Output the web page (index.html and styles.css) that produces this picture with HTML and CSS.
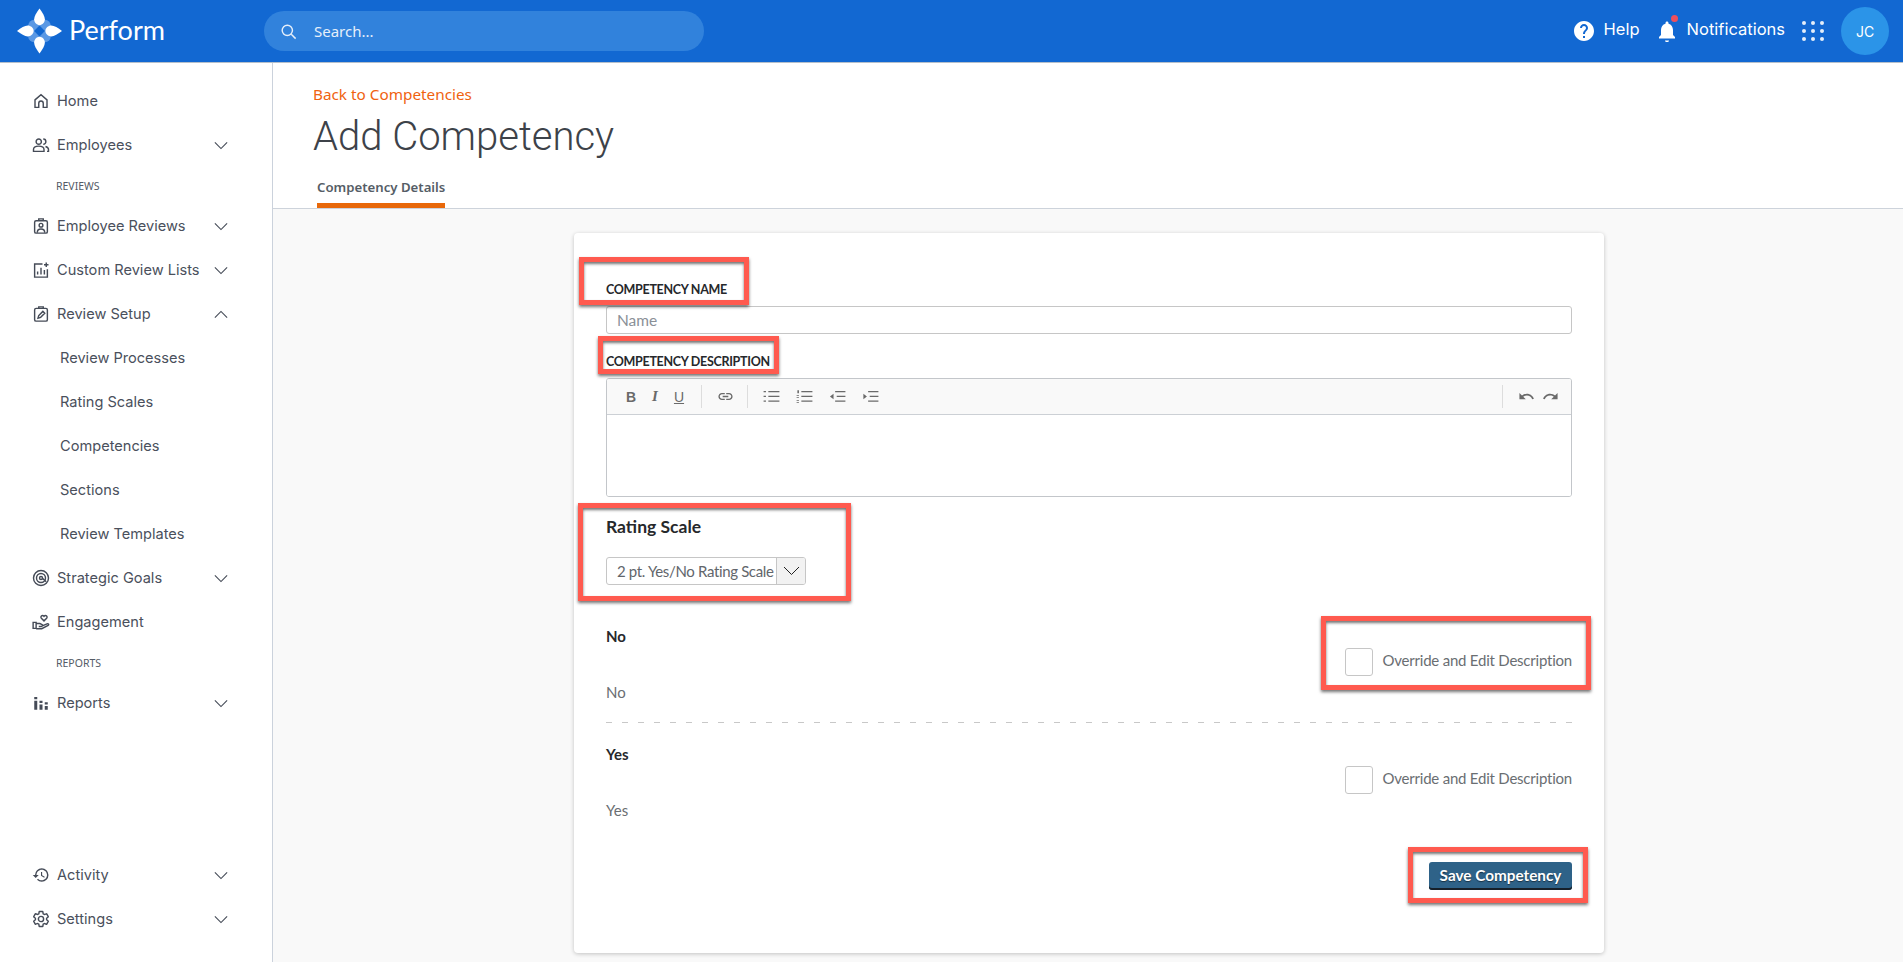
FILE: index.html
```html
<!DOCTYPE html>
<html lang="en">
<head>
<meta charset="utf-8">
<title>Add Competency</title>
<link rel="stylesheet" href="styles.css">
</head>
<body>
<svg class="defs" width="0" height="0" aria-hidden="true">
  <symbol id="down" viewBox="0 0 16 10"><path d="M1 1.500 8 8.500 15 1.500" fill="none" stroke="currentColor" stroke-width="1.300"/></symbol>
  <symbol id="up" viewBox="0 0 16 10"><path d="M1 8.500 8 1.500 15 8.500" fill="none" stroke="currentColor" stroke-width="1.300"/></symbol>
</svg>
<header class="topbar">
  <div class="brand">
    <svg class="logo" viewBox="0 0 46 46" aria-hidden="true">
      <rect x="11.500" y="11.500" width="23" height="23" rx="6" fill="#5a98e4"/>
      <path d="M23 17.500 28.500 23 23 28.500 17.500 23z" fill="#1268d2"/>
      <path id="petal" d="M23 0C26 4 28.500 8 28.500 11 28.500 14 26 17 23 17 20 17 17.500 14 17.500 11 17.500 8 20 4 23 0z" fill="#fff"/>
      <path d="M23 46C26 42 28.500 38 28.500 35 28.500 32 26 29 23 29 20 29 17.500 32 17.500 35 17.500 38 20 42 23 46z" fill="#fff"/>
      <path d="M0 23C4 20 8 17.500 11 17.500 14 17.500 17 20 17 23 17 26 14 28.500 11 28.500 8 28.500 4 26 0 23z" fill="#fff"/>
      <path d="M46 23C42 20 38 17.500 35 17.500 32 17.500 29 20 29 23 29 26 32 28.500 35 28.500 38 28.500 42 26 46 23z" fill="#fff"/>
    </svg>
    <span class="brand-name">Perform</span>
  </div>
  <div class="search">
    <svg class="search-icon" viewBox="0 0 24 24" aria-hidden="true"><circle cx="10.500" cy="10.500" r="6.500" fill="none" stroke="currentColor" stroke-width="1.800"/><path d="m15.500 15.500 5.500 5.500" stroke="currentColor" stroke-width="1.800" fill="none"/></svg>
    <span>Search...</span>
  </div>
  <div class="top-actions">
    <svg class="help-icon" viewBox="0 0 24 24" aria-hidden="true"><path fill="currentColor" d="M12 2C6.480 2 2 6.480 2 12s4.480 10 10 10 10-4.480 10-10S17.520 2 12 2zm1 17h-2v-2h2v2zm2.070-7.750l-.9.920C13.450 12.900 13 13.500 13 15h-2v-.5c0-1.100.45-2.100 1.170-2.830l1.240-1.260c.37-.36.59-.86.59-1.410 0-1.100-.9-2-2-2s-2 .9-2 2H8c0-2.210 1.790-4 4-4s4 1.790 4 4c0 .88-.36 1.680-.93 2.250z"/></svg>
    <span class="top-text help-text">Help</span>
    <span class="bell">
      <svg class="bell-icon" viewBox="0 0 24 24" aria-hidden="true"><path fill="currentColor" d="M12 23c1.100 0 2-.5 2-1.500h-4c0 1 .9 1.500 2 1.500zm6-7v-5c0-3.070-1.630-5.640-4.500-6.320V4c0-.83-.67-1.500-1.500-1.500s-1.500.67-1.500 1.500v.68C7.640 5.360 6 7.920 6 11v5l-2 2v1.500h16V18l-2-2z"/></svg>
      <i class="bell-dot"></i>
    </span>
    <span class="top-text">Notifications</span>
    <span class="apps"><i></i><i></i><i></i><i></i><i></i><i></i><i></i><i></i><i></i></span>
    <span class="avatar">JC</span>
  </div>
</header>
<div class="shell">
  <nav class="sidebar">
    <div class="nav-main">
      <a class="nav-row"><svg class="nav-icon" viewBox="0 0 24 24"><path d="M4 10.500 12 3.500l8 7V20.500h-5V15a3 3 0 0 0-6 0v5.500H4z"/></svg><span>Home</span></a>
      <a class="nav-row"><svg class="nav-icon" viewBox="0 0 24 24"><circle cx="9" cy="7.500" r="3.500"/><path d="M2 20.500V18c0-2.800 3-4.500 7-4.500s7 1.700 7 4.500v2.500zM15 4a3.500 3.500 0 0 1 0 7M18 14c2.500.7 4 2 4 4v2.500h-2"/></svg><span>Employees</span><svg class="chev"><use href="#down"/></svg></a>
      <div class="nav-label">REVIEWS</div>
      <a class="nav-row"><svg class="nav-icon" viewBox="0 0 24 24"><rect x="3.500" y="5" width="17" height="16.500" rx="2"/><path d="M9 5V2.500h6V5"/><circle cx="12" cy="11" r="2.500"/><path d="M7 21c0-3.500 2-5 5-5s5 1.500 5 5"/></svg><span>Employee Reviews</span><svg class="chev"><use href="#down"/></svg></a>
      <a class="nav-row"><svg class="nav-icon" viewBox="0 0 24 24"><path d="M20.500 11v10.500h-17V4H14M7.500 18v-4M12 18V9M16.500 18v-6M19 2v6M16 5h6"/></svg><span>Custom Review Lists</span><svg class="chev"><use href="#down"/></svg></a>
      <a class="nav-row"><svg class="nav-icon" viewBox="0 0 24 24"><rect x="3.500" y="4.500" width="17" height="17" rx="2"/><path d="M9 4.500V2.500h6v2M8 17.500l1-3.500 5.500-5.500 2.500 2.500-5.500 5.500z"/></svg><span>Review Setup</span><svg class="chev"><use href="#up"/></svg></a>
      <a class="nav-row sub">Review Processes</a>
      <a class="nav-row sub">Rating Scales</a>
      <a class="nav-row sub">Competencies</a>
      <a class="nav-row sub">Sections</a>
      <a class="nav-row sub">Review Templates</a>
      <a class="nav-row"><svg class="nav-icon" viewBox="0 0 24 24"><circle cx="12" cy="12" r="10"/><circle cx="12" cy="12" r="6"/><circle cx="12" cy="12" r="2"/><path d="M14 12.500 19 17"/></svg><span>Strategic Goals</span><svg class="chev"><use href="#down"/></svg></a>
      <a class="nav-row"><svg class="nav-icon" viewBox="0 0 24 24"><path d="M1.500 12.500h4v8h-4zM5.500 14h5l3 1.500c1.500.8.8 2.500-1 2.500H9M13 17.500l7-3c2-.6 3 1 1.500 2L13 21H5.500"/><path d="M16 10.500 12.500 7c-2-2.500 1.500-5 3.500-2.500 2-2.500 5.500 0 3.500 2.500z"/></svg><span>Engagement</span></a>
      <div class="nav-label">REPORTS</div>
      <a class="nav-row"><svg class="nav-icon solid" viewBox="0 0 24 24"><path d="M3 4h4v3H3zM3 9h4v12H3zM10 9h4v3h-4zM10 14h4v7h-4zM17 11h4v3h-4zM17 16h4v5h-4z"/></svg><span>Reports</span><svg class="chev"><use href="#down"/></svg></a>
    </div>
    <div class="nav-foot">
      <a class="nav-row"><svg class="nav-icon solid" viewBox="0 0 24 24"><path d="M13 3a9 9 0 0 0-9 9H1l3.890 3.890.07.14L9 12H6c0-3.870 3.130-7 7-7s7 3.130 7 7-3.130 7-7 7c-1.930 0-3.680-.79-4.940-2.060l-1.420 1.420A8.954 8.954 0 0 0 13 21a9 9 0 0 0 0-18zm-1 5v5l4.280 2.540.72-1.210-3.500-2.080V8H12z"/></svg><span>Activity</span><svg class="chev"><use href="#down"/></svg></a>
      <a class="nav-row"><svg class="nav-icon" viewBox="0 0 24 24"><path d="M19.430 12.980c.04-.32.07-.64.07-.98 0-.34-.03-.66-.07-.98l2.110-1.650c.19-.15.24-.42.12-.64l-2-3.460c-.09-.16-.26-.25-.44-.25-.06 0-.12.010-.17.030l-2.490 1c-.52-.4-1.080-.73-1.690-.98l-.38-2.650C14.460 2.180 14.250 2 14 2h-4c-.25 0-.46.180-.49.420l-.38 2.650c-.61.25-1.170.59-1.690.98l-2.490-1c-.06-.02-.12-.03-.18-.03-.17 0-.34.090-.43.250l-2 3.460c-.13.22-.07.49.12.64l2.110 1.650c-.04.32-.07.65-.07.98 0 .33.030.66.070.98l-2.110 1.650c-.19.15-.24.42-.12.64l2 3.460c.09.16.26.25.44.25.06 0 .12-.01.17-.03l2.490-1c.52.4 1.080.73 1.690.98l.38 2.650c.03.24.24.42.49.42h4c.25 0 .46-.18.49-.42l.38-2.650c.61-.25 1.170-.59 1.690-.98l2.490 1c.06.02.12.03.18.03.17 0 .34-.09.43-.25l2-3.460c.12-.22.07-.49-.12-.64l-2.110-1.650z"/><circle cx="12" cy="12" r="3.500"/></svg><span>Settings</span><svg class="chev"><use href="#down"/></svg></a>
    </div>
  </nav>
  <main class="main">
    <section class="page-head">
      <a class="back-link">Back to Competencies</a>
      <h1 class="page-title">Add Competency</h1>
      <div class="tabs"><span class="tab">Competency Details</span></div>
    </section>
    <section class="card">
      <label class="field-label name-label">COMPETENCY NAME</label>
      <input class="text-input" type="text" placeholder="Name">
      <label class="field-label desc-label">COMPETENCY DESCRIPTION</label>
      <div class="editor">
        <div class="toolbar">
          <span class="tool glyph-b">B</span>
          <span class="tool glyph-i">I</span>
          <span class="tool glyph-u">U</span>
          <i class="tool-sep"></i>
          <span class="tool"><svg viewBox="0 0 24 24"><path fill="currentColor" d="M3.900 12c0-1.710 1.390-3.100 3.100-3.100h4V7H7c-2.760 0-5 2.240-5 5s2.240 5 5 5h4v-1.900H7c-1.710 0-3.100-1.390-3.100-3.100zM8 13h8v-2H8v2zm9-6h-4v1.900h4c1.710 0 3.100 1.390 3.100 3.100s-1.390 3.100-3.100 3.100h-4V17h4c2.760 0 5-2.240 5-5s-2.240-5-5-5z"/></svg></span>
          <i class="tool-sep"></i>
          <span class="tool list"><svg viewBox="0 0 24 24"><path fill="currentColor" d="M8 5h14v1.500H8zM8 11h14v1.500H8zM8 17h14v1.500H8zM2 5h3v1.500H2zM2 11h3v1.500H2zM2 17h3v1.500H2z"/></svg></span>
          <span class="tool list"><svg viewBox="0 0 24 24"><path fill="currentColor" d="M8 5h14v1.500H8zM8 11h14v1.500H8zM8 17h14v1.500H8zM3 4h2v4H3zM2 10.500h3v1H2zM2 13h3v1H2zM2 16.500h3v1H2zM2 19h3v1H2z"/></svg></span>
          <span class="tool list"><svg viewBox="0 0 24 24"><path fill="currentColor" d="M9 5h13v1.500H9zM11 11h11v1.500H11zM9 17h13v1.500H9zM7 8.500v7L2.500 12z"/></svg></span>
          <span class="tool list"><svg viewBox="0 0 24 24"><path fill="currentColor" d="M9 5h13v1.500H9zM11 11h11v1.500H11zM9 17h13v1.500H9zM3 8.500v7L7.500 12z"/></svg></span>
          <i class="tool-grow"></i>
          <i class="tool-sep end"></i>
          <span class="tool"><svg viewBox="0 0 24 24"><path fill="currentColor" d="M12.500 8c-2.650 0-5.050.99-6.900 2.600L2 7v9h9l-3.620-3.620c1.390-1.160 3.160-1.880 5.120-1.880 3.540 0 6.550 2.310 7.600 5.500l2.370-.78C21.080 11.030 17.150 8 12.500 8z"/></svg></span>
          <span class="tool"><svg viewBox="0 0 24 24"><path fill="currentColor" d="M18.400 10.600C16.550 8.990 14.150 8 11.500 8c-4.650 0-8.580 3.030-9.960 7.220L3.900 16c1.050-3.190 4.050-5.500 7.600-5.500 1.950 0 3.730.72 5.120 1.880L13 16h9V7l-3.600 3.600z"/></svg></span>
        </div>
        <div class="editor-body"></div>
      </div>
      <h2 class="scale-title">Rating Scale</h2>
      <div class="select">
        <span class="select-value">2 pt. Yes/No Rating Scale</span>
        <span class="select-arrow"><svg viewBox="0 0 16 10"><path d="M.5 1 8 8.500 15.500 1" fill="none" stroke="currentColor" stroke-width="1"/></svg></span>
      </div>
      <div class="rating first">
        <div class="rating-name">No</div>
        <label class="override"><input class="check" type="checkbox"><span class="override-text">Override and Edit Description</span></label>
        <div class="rating-desc">No</div>
      </div>
      <div class="rule"></div>
      <div class="rating second">
        <div class="rating-name">Yes</div>
        <label class="override"><input class="check" type="checkbox"><span class="override-text">Override and Edit Description</span></label>
        <div class="rating-desc">Yes</div>
      </div>
      <div class="actions"><button class="save" type="button">Save Competency</button></div>

      <i class="mark mark-name"></i>
      <i class="mark mark-desc"></i>
      <i class="mark mark-scale"></i>
      <i class="mark mark-override"></i>
      <i class="mark mark-save"></i>
    </section>
  </main>
</div>
</body>
</html>
```

FILE: styles.css
```css
* { box-sizing: border-box; }
html, body { margin: 0; height: 962px; overflow: hidden; }
body { font-family: "Inter", "Liberation Sans", sans-serif; background: #fff; color: #3e4450; display: flex; flex-direction: column; }
.defs { position: absolute; }

/* top bar */
.topbar { height: 63px; flex: none; display: flex; align-items: center; background: #1268d2; border-bottom: 1px solid #b5bfca; color: #fff; padding-left: 17px; }
.brand { display: flex; align-items: center; width: 247px; }
.logo { width: 45px; height: 46px; flex: none; }
.brand-name { font-family: "Lato", sans-serif; font-weight: 400; font-size: 27px; margin-left: 7px; padding-bottom: 4px; }
.search { width: 440px; height: 40px; border-radius: 20px; background: #3182dc; display: flex; align-items: center; padding-left: 15px; font-family: "Noto Sans", sans-serif; font-size: 15px; color: #e6effa; }
.search-icon { width: 19px; height: 19px; margin-right: 16px; }
.top-actions { margin-left: auto; display: flex; align-items: center; height: 100%; padding-right: 14px; }
.help-icon { width: 24px; height: 24px; margin-right: 8px; }
.top-text { font-size: 16.500px; font-weight: 400; padding-bottom: 4px; }
.help-text { margin-right: 15px; }
.bell { position: relative; width: 24px; height: 24px; margin-right: 8px; }
.bell-icon { width: 24px; height: 24px; display: block; }
.bell-dot { position: absolute; left: 16px; top: -4px; width: 7px; height: 7px; border-radius: 50%; background: #ee4f5c; }
.apps { display: grid; grid-template-columns: repeat(3, 4px); grid-auto-rows: 4px; column-gap: 5px; row-gap: 4px; margin: 0 17px 0 17px; }
.apps i { width: 4px; height: 4px; border-radius: 50%; background: #e4eefa; }
.avatar { width: 48px; height: 48px; border-radius: 50%; background: #2b94e8; display: flex; align-items: center; justify-content: center; font-size: 14px; }

/* layout */
.shell { flex: 1; display: flex; min-height: 0; }
.sidebar { width: 273px; flex: none; border-right: 1px solid #cbd2dc; background: #fff; padding: 16px 0 21px; display: flex; flex-direction: column; justify-content: space-between; }
.nav-row { height: 44px; display: flex; align-items: center; font-size: 14.600px; color: #4a505c; padding-left: 32px; position: relative; }
.nav-row.sub { padding-left: 60px; }
.nav-row span { white-space: nowrap; }
.nav-icon { width: 18px; height: 18px; margin-right: 7px; flex: none; fill: none; stroke: #454b57; stroke-width: 1.900; }
.nav-icon.solid { fill: #454b57; stroke: none; }
.chev { position: absolute; left: 214px; top: 18px; width: 14px; height: 9px; color: #454b57; }
.nav-label { height: 37px; display: flex; align-items: center; padding-left: 56px; font-family: "Noto Sans", sans-serif; font-size: 10.500px; color: #555b66; }

/* main */
.main { flex: 1; background: #f9f9f9; min-width: 0; }
.page-head { height: 146px; background: #fff; border-bottom: 1px solid #cdd3db; padding: 21px 0 0 40px; }
.back-link { display: block; font-family: "Noto Sans", sans-serif; font-size: 15.300px; line-height: 20px; color: #f0620f; }
.page-title { margin: 10px 0 0; font-family: "Roboto", sans-serif; font-weight: 300; font-size: 40px; line-height: 46px; color: #3d4249; }
.tabs { margin: 17px 0 0 4px; display: flex; }
.tab { font-family: "Noto Sans", sans-serif; font-weight: 600; font-size: 13.200px; line-height: 20px; height: 31px; border-bottom: 5px solid #e8680a; color: #555d66; }

/* card */
.card { position: relative; width: 1030px; height: 720px; margin: 24px 0 0 301px; background: #fff; border-radius: 4px; box-shadow: 0 1px 4px rgba(0,0,0,.22); padding: 46px 32px 0 32px; font-family: "Lato", sans-serif; }
.field-label { display: block; padding-top: 1px; font-weight: 700; font-size: 12.500px; line-height: 20px; color: #26282b; letter-spacing: -.3px; white-space: nowrap; }
.text-input { display: block; width: 100%; height: 28px; margin: 6px 0 0; border: 1px solid #c6c6c6; border-radius: 3px; padding: 0 10px 1px; font-family: inherit; font-size: 15.500px; font-weight: 400; outline: none; }
.text-input::placeholder { color: #8a9097; opacity: 1; }
.desc-label { margin-top: 17px; }
.editor { margin-top: 6px; height: 119px; border: 1px solid #c3c6ca; border-radius: 3px; display: flex; flex-direction: column; overflow: hidden; }
.toolbar { height: 36px; flex: none; display: flex; align-items: center; padding: 0 9px 0 12px; background: #f9f9f9; border-bottom: 1px solid #ccd0d5; color: #6a6a6a; }
.tool { width: 24px; height: 24px; flex: none; display: flex; align-items: center; justify-content: center; font-size: 14px; font-family: "Liberation Sans", sans-serif; }
.tool svg { width: 17px; height: 17px; display: block; }
.tool.list svg { width: 19px; height: 19px; }
.tool.list + .tool.list { margin-left: 9px; }
.glyph-b { font-weight: 700; }
.glyph-i { font-family: "Liberation Serif", serif; font-weight: 700; font-style: italic; font-size: 15px; }
.glyph-u { text-decoration: underline; }
.tool-sep { width: 1px; height: 23px; background: #ddd; margin: 0 11px 0 10px; flex: none; }
.tool-sep.end { margin: 0 11px 0 0; }
.tool-grow { flex: 1; }
.editor-body { flex: 1; background: #fff; }
.scale-title { margin: 18px 0 0; font-size: 17.500px; line-height: 24px; font-weight: 700; color: #26282b; }
.select { margin-top: 18px; width: 200px; height: 28px; display: flex; border: 1px solid #c6c6c6; border-radius: 3px; overflow: hidden; font-weight: 400; font-size: 15px; letter-spacing: -.35px; color: #62666b; }
.select-value { flex: 1; min-width: 0; padding-left: 10px; line-height: 26px; white-space: nowrap; }
.select-arrow { width: 29px; flex: none; background: #f2f2f2; border-left: 1px solid #c6c6c6; display: flex; align-items: center; justify-content: center; color: #222; }
.select-arrow svg { width: 17px; height: 10px; }
.rating.first { margin-top: 42px; padding-bottom: 19px; }
.rating.second { margin-top: 22px; }
.rating-name { font-weight: 700; font-size: 15px; line-height: 18px; padding-bottom: 2px; color: #26282b; }
.override { margin-top: 1px; display: flex; justify-content: flex-end; align-items: center; height: 28px; font-weight: 400; font-size: 15px; letter-spacing: -.22px; color: #6a6e72; }
.override-text { padding-bottom: 5px; }
.check { appearance: none; width: 28px; height: 28px; margin: 0 10px 0 0; border: 1px solid #c6c6c6; border-radius: 3px; background: #fff; }
.rating-desc { margin-top: 7px; font-weight: 400; font-size: 15px; line-height: 18px; padding-bottom: 2px; color: #6a6e72; }
.rule { height: 1px; background: repeating-linear-gradient(90deg, #c8c8c8 0 6px, transparent 6px 16px); }
.actions { margin-top: 41px; display: flex; justify-content: flex-end; }
.save { width: 143px; height: 28px; padding: 0 0 2px; border: 0; border-radius: 3px; background: #2e6288; box-shadow: inset 0 -2px 0 #16202a; color: #fff; font-family: inherit; font-weight: 700; font-size: 15.300px; text-shadow: 0 1px 1px rgba(0,0,0,.5); }

/* red annotation boxes drawn over the screenshot */
.mark { position: absolute; border: 5px solid #ff5a4f; box-shadow: 0 2px 3px rgba(0,0,0,.55), inset 0 2px 3px rgba(0,0,0,.55); pointer-events: none; }
.mark-name { left: 5px; top: 24px; width: 170px; height: 48px; }
.mark-desc { left: 24px; top: 103px; width: 181px; height: 38px; }
.mark-scale { left: 4px; top: 270px; width: 273px; height: 98px; }
.mark-override { left: 747px; top: 383px; width: 270px; height: 74px; }
.mark-save { left: 834px; top: 614px; width: 180px; height: 56px; }
```
